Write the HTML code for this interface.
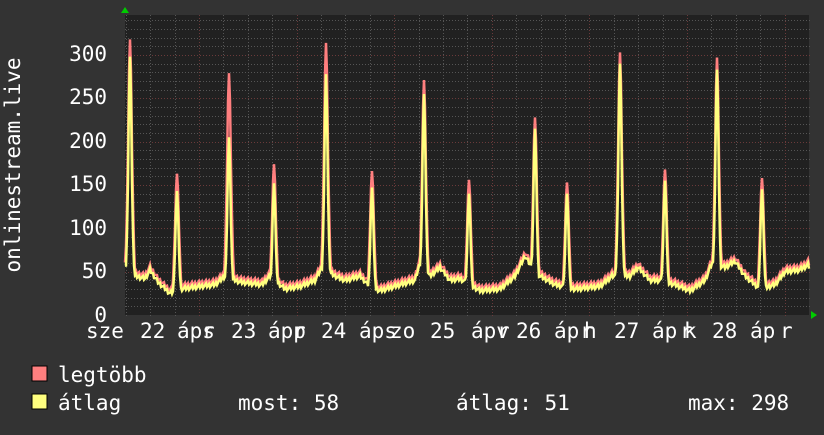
<!DOCTYPE html>
<html><head><meta charset="utf-8"><style>
html,body{margin:0;padding:0;background:#333;}
body{width:824px;height:430px;overflow:hidden;}
svg text{font-family:"DejaVu Sans Mono","Liberation Mono",monospace;fill:#fff;font-size:21px;}
</style></head><body>
<svg id="s" width="824" height="430" xmlns="http://www.w3.org/2000/svg">
<rect width="824" height="430" fill="#333"/>
<rect x="125" y="15" width="684" height="300" fill="#212121"/>
<g id="grid"></g>
<polygon points="121,13 129,13 125,7" fill="#0c0"/>
<polygon points="811,311 811,319 817,315" fill="#0c0"/>
<text x="107" y="61" text-anchor="end">300</text>
<text x="107" y="104" text-anchor="end">250</text>
<text x="107" y="148" text-anchor="end">200</text>
<text x="107" y="191" text-anchor="end">150</text>
<text x="107" y="235" text-anchor="end">100</text>
<text x="107" y="278" text-anchor="end">50</text>
<text x="107" y="322" text-anchor="end">0</text>
<text transform="translate(20,165) rotate(-90)" text-anchor="middle">onlinestream.live</text>
<g id="xl"></g>
<rect x="32" y="366" width="15" height="15" fill="#ff7f7f" stroke="#000" stroke-width="1"/>
<rect x="32" y="394" width="15" height="15" fill="#ffff7f" stroke="#000" stroke-width="1"/>
<text x="58" y="382">legtöbb</text>
<text x="58" y="410">átlag</text>
<text x="238" y="410">most: 58</text>
<text x="456" y="410">átlag: 51</text>
<text x="688" y="410">max: 298</text>
</svg>
<script>
var ns="http://www.w3.org/2000/svg",g=document.getElementById('grid'),s=document.getElementById('s');
function ln(x1,y1,x2,y2,c,d){var l=document.createElementNS(ns,'line');l.setAttribute('x1',x1);l.setAttribute('y1',y1);l.setAttribute('x2',x2);l.setAttribute('y2',y2);l.setAttribute('stroke',c);if(d)l.setAttribute('stroke-dasharray',d);l.setAttribute('stroke-width',1);g.appendChild(l);}
for(var v=10;v<=340;v+=10){var y=Math.round(315-v*0.8667)+0.5;if(y<16)break;ln(125,y,812,y,v%50?'#555':'#6a3a3a','1,2');}
for(var i=-3;i<=24;i++){var x=Math.round(199+i*24.4)+0.5;if(x<126||x>808)continue;var maj=((i%4)+4)%4==0;ln(x,15,x,318,maj?'#6a3a3a':'#555','1,2');}
var kp=[[125,55],[135,45],[145,42],[150,52],[158,38],[170,25],[180,30],[200,33],[215,35],[225,45],[240,38],[262,35],[270,45],[285,30],[300,33],[315,40],[322,55],[335,45],[345,40],[360,45],[368,35],[380,28],[400,35],[415,40],[420,60],[430,45],[440,55],[450,40],[460,42],[480,28],[500,30],[515,45],[525,68],[532,55],[540,45],[555,35],[575,30],[600,33],[612,45],[630,45],[638,55],[650,40],[660,40],[675,35],[690,28],[705,40],[712,60],[725,55],[735,62],[745,45],[760,30],[775,35],[785,50],[800,52],[808,58]];
var pk=[[130,298,312],[177,143,157],[229,205,273],[274,152,168],[326,278,308],[372,147,160],[424,255,265],[469,140,150],[535,215,222],[567,140,147],[620,290,297],[665,155,162],[717,283,291],[762,145,152]];
function base(x){for(var i=0;i<kp.length-1;i++)if(x>=kp[i][0]&&x<=kp[i+1][0]){var t=(x-kp[i][0])/(kp[i+1][0]-kp[i][0]);return kp[i][1]+t*(kp[i+1][1]-kp[i][1]);}return 55;}
var pa=[],pm=[];
for(var x=125;x<=809;x++){var a=base(x)+((x*37)%7-3)*0.8,m=a+4;
for(var j=0;j<pk.length;j++){var d=Math.abs(x-pk[j][0]);var k=Math.max(Math.exp(-d*d/6),0.6*Math.exp(-d*d/14),Math.exp(-d/5)*0.25);a=Math.max(a,pk[j][1]*k);m=Math.max(m,pk[j][2]*Math.max(Math.exp(-d*d/8),0.7*Math.exp(-d*d/16))+(k>0.2?6:0));}
pa.push(x+','+(315-a*0.8667).toFixed(1));pm.push(x+','+(315-m*0.8667).toFixed(1));}
function pl(p,c,w){var e=document.createElementNS(ns,'polyline');e.setAttribute('points',p.join(' '));e.setAttribute('fill','none');e.setAttribute('stroke',c);e.setAttribute('stroke-width',w);s.insertBefore(e,s.querySelector('polygon'));}
pl(pm,'#ff7f7f',2.5);pl(pa,'#ffff7f',2.5);
var xl=document.getElementById('xl');
[["sze",86],["22",140],["áps",177],["r",202],["23",231],["ápp",268],["r",293],["24",321],["áps",359],["zo",390],["25",430],["ápv",471],["r",497],["26",516],["áp",554],["r",580],["h",584],["27",614],["áp",652],["r",680],["k",684],["28",712],["áp",750],["r",780]].forEach(function(t){var e=document.createElementNS(ns,'text');e.setAttribute('x',t[1]);e.setAttribute('y',338);e.textContent=t[0];xl.appendChild(e);});
</script>
</body></html>
